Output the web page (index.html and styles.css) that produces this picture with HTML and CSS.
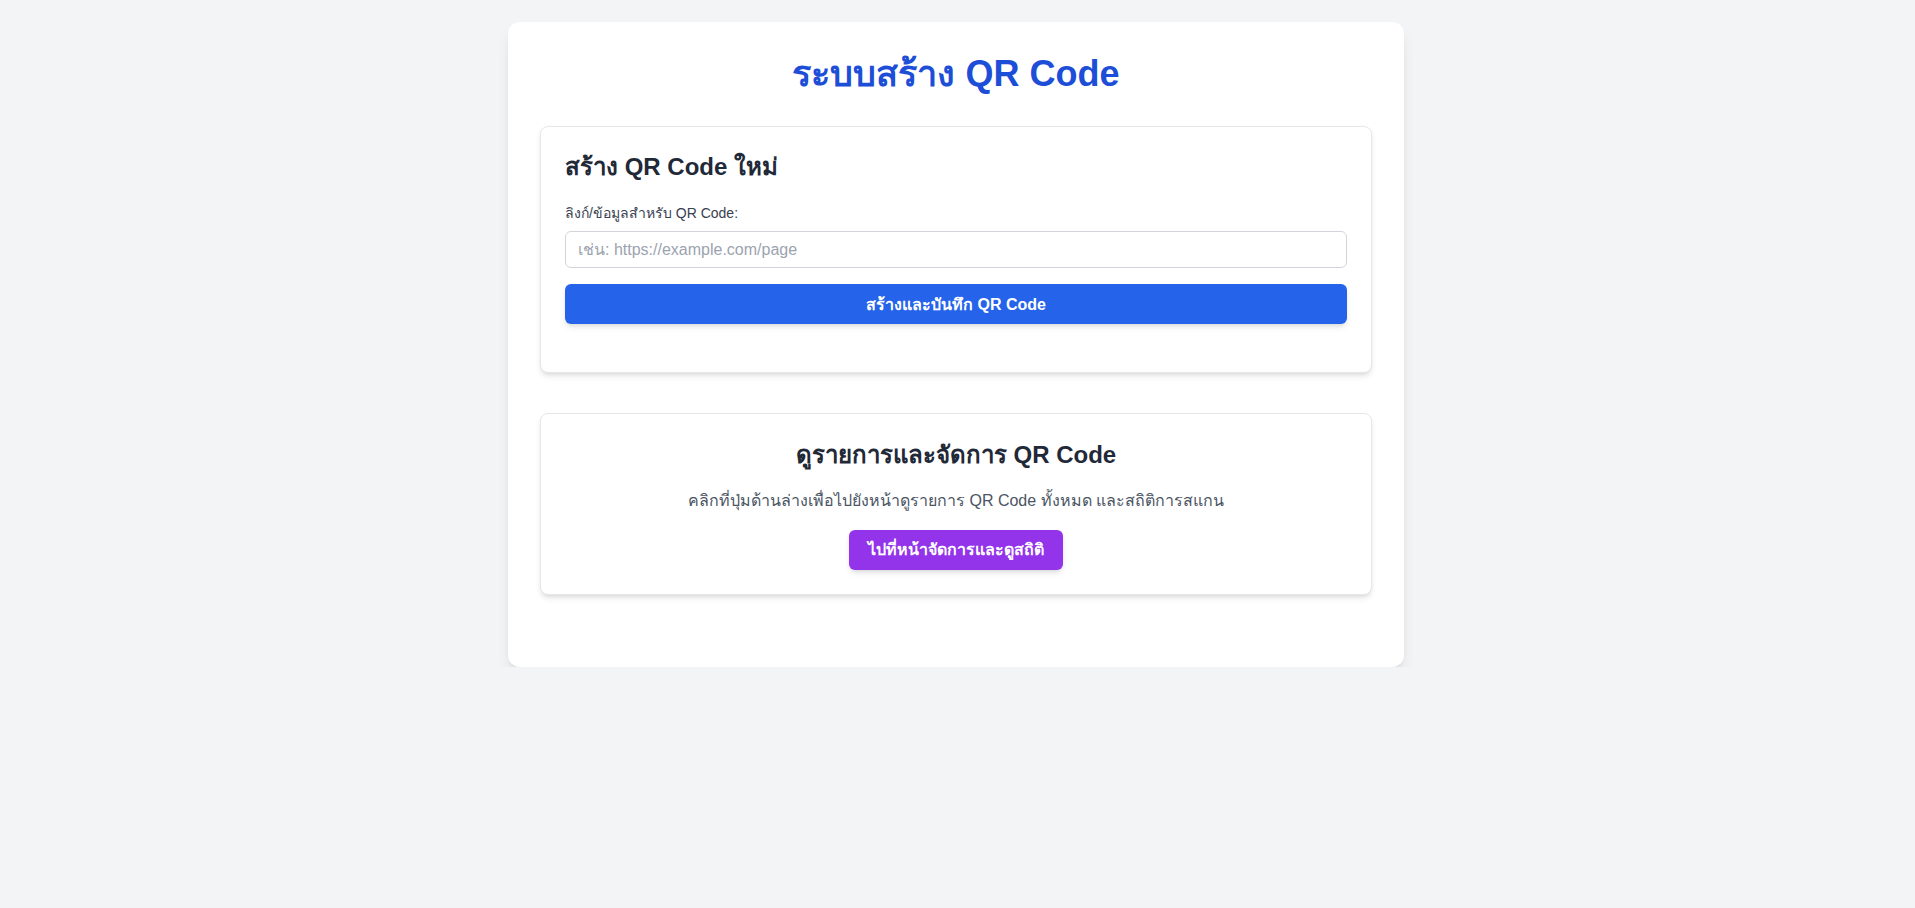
FILE: index.html
```html
<!DOCTYPE html>
<html lang="th">
<head>
<meta charset="utf-8">
<title>ระบบสร้าง QR Code</title>
<link rel="stylesheet" href="styles.css">
</head>
<body>
<div class="container">
  <h1 class="title">ระบบสร้าง QR Code</h1>

  <section class="panel panel-create">
    <h2 class="panel-title">สร้าง QR Code ใหม่</h2>
    <label class="field-label" for="qrInput">ลิงก์/ข้อมูลสำหรับ QR Code:</label>
    <input id="qrInput" class="field-input" type="text" placeholder="เช่น: https://example.com/page">
    <button class="btn btn-blue" type="button">สร้างและบันทึก QR Code</button>
    <div class="result"></div>
  </section>

  <section class="panel panel-manage">
    <h2 class="panel-title center">ดูรายการและจัดการ QR Code</h2>
    <p class="panel-text">คลิกที่ปุ่มด้านล่างเพื่อไปยังหน้าดูรายการ QR Code ทั้งหมด และสถิติการสแกน</p>
    <a class="btn btn-purple" href="#">ไปที่หน้าจัดการและดูสถิติ</a>
  </section>
</div>
</body>
</html>
```

FILE: styles.css
```css
* {
  box-sizing: border-box;
}

html, body {
  margin: 0;
  padding: 0;
}

body {
  background: #f3f4f6;
  font-family: "Liberation Sans", Arial, "Noto Sans", sans-serif;
  color: #1f2937;
  line-height: 1.5;
  padding-right: 3px;
}

.container {
  width: 896px;
  margin: 22px auto 0;
  background: #ffffff;
  border-radius: 12px;
  padding: 32px;
  box-shadow: 0 10px 15px -3px rgba(0, 0, 0, 0.1), 0 4px 6px -4px rgba(0, 0, 0, 0.1);
}

.title {
  margin: 0 0 32px;
  font-size: 36px;
  line-height: 40px;
  font-weight: 700;
  color: #1d4ed8;
  text-align: center;
}

.panel {
  background: #ffffff;
  border: 1px solid #e5e7eb;
  border-radius: 8px;
  padding: 24px;
  margin-bottom: 40px;
  box-shadow: 0 4px 6px -1px rgba(0, 0, 0, 0.1), 0 2px 4px -2px rgba(0, 0, 0, 0.1);
}

.panel-manage {
  display: flex;
  flex-direction: column;
  align-items: center;
}

.panel-title {
  margin: 0 0 20px;
  font-size: 24px;
  line-height: 32px;
  font-weight: 700;
  color: #1f2937;
}

.panel-manage .panel-title {
  margin: 1px 0 18px;
}

.field-label {
  display: block;
  font-size: 14px;
  line-height: 20px;
  color: #374151;
  margin-bottom: 8px;
}

.field-input {
  display: block;
  width: 100%;
  height: 37px;
  padding: 8px 12px;
  font-family: inherit;
  font-size: 16px;
  line-height: 19px;
  color: #1f2937;
  border: 1px solid #d1d5db;
  border-radius: 6px;
  background: #ffffff;
  margin: 0 0 16px;
  outline: none;
}

.field-input::placeholder {
  color: #9ca3af;
}

.btn {
  display: flex;
  align-items: center;
  justify-content: center;
  height: 40px;
  padding: 0 19px;
  border: 0;
  border-radius: 6px;
  font-family: inherit;
  font-size: 16px;
  font-weight: 700;
  color: #ffffff;
  text-decoration: none;
  cursor: pointer;
  box-shadow: 0 4px 6px -1px rgba(0, 0, 0, 0.1), 0 2px 4px -2px rgba(0, 0, 0, 0.1);
}

.btn-blue {
  width: 100%;
  background: #2563eb;
}

.btn-purple {
  background: #9333ea;
}

.result {
  height: 24px;
}

.panel-text {
  margin: 0 0 17px;
  font-size: 16px;
  line-height: 24px;
  color: #4b5563;
  text-align: center;
}
```
